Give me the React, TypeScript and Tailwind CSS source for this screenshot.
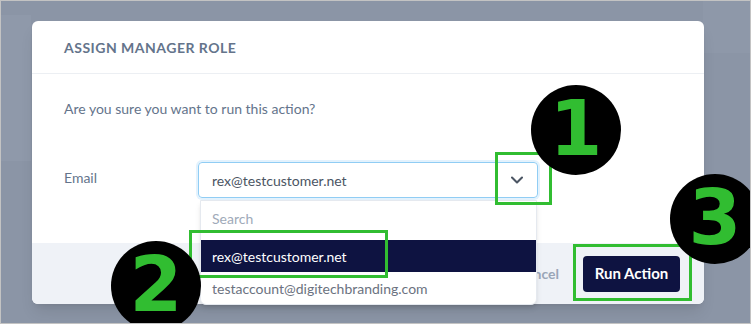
import { ChevronDown } from 'lucide-react'

const font = { fontFamily: 'Lato, "Open Sans", sans-serif' }

const Marker = ({ n, className }: { n: string; className: string }) => (
  <div
    className={`absolute flex h-[90px] w-[90px] items-center justify-center rounded-full bg-black text-[76px] font-bold leading-none text-[#31bd31] ${className}`}
    style={{ fontFamily: '"DejaVu Sans", sans-serif' }}
  >
    <span className="-mt-[2px]">{n}</span>
  </div>
)

const App = () => {
  return (
    <div
      className="relative h-[324px] w-[751px] overflow-hidden border border-[#c3c3c3] bg-[#8b95a6] pl-[31px] pt-[20px]"
      style={font}
    >
      {/* faint page behind the overlay */}
      <div className="absolute left-0 top-[14px] h-[146px] w-[30px] bg-[#8f99aa]" />
      <div className="absolute right-0 top-0 h-[52px] w-[47px] bg-[#8e98a9]" />

      {/* Modal */}
      <div className="relative flex h-[283px] w-[672px] flex-col overflow-hidden rounded-md bg-white shadow-lg">
        <div className="flex h-[53px] items-center border-b border-[#eceff3] px-8">
          <h2 className="text-[14px] font-bold uppercase tracking-[0.5px] text-[#64748b]">
            Assign Manager Role
          </h2>
        </div>

        <div className="flex-1 px-8 pt-[25px]">
          <p className="text-[14px] leading-5 text-[#64748b]">
            Are you sure you want to run this action?
          </p>

          <div className="mt-[43px] flex items-start">
            <label className="w-[134px] pt-[6px] text-[14px] leading-5 text-[#64748b]">Email</label>
            <div className="flex h-[36px] w-[340px] items-center justify-between rounded border border-[#90cdf4] pl-[13px] pr-[10px] shadow-[0_0_0_2px_#e3f2fd]">
              <span className="text-[14px] text-[#4b5563]">rex@testcustomer.net</span>
              <ChevronDown size={20} strokeWidth={2.5} className="text-[#4b5563]" />
            </div>
          </div>
        </div>

        <div className="flex h-[61px] items-center justify-end gap-6 bg-[#eff2f7] pr-6">
          <span className="text-[14px] font-bold text-[#9aa6b8]">Cancel</span>
          <button className="h-[36px] w-[97px] rounded bg-[#0e1341] text-[15px] font-bold text-white">
            Run Action
          </button>
        </div>
      </div>

      {/* Open dropdown */}
      <div className="absolute left-[199px] top-[199px] w-[337px] overflow-hidden rounded-b-md border border-[#e5e9ef] bg-white text-[14px] shadow-md">
        <div className="h-[39px] px-[11px] pt-[8px] leading-5 text-[#a0aab9]">Search</div>
        <div className="flex h-[32px] items-center bg-[#0e1341] px-[11px] text-white">rex@testcustomer.net</div>
        <div className="flex h-[32px] items-center px-[11px] text-[#6b7280]">testaccount@digitechbranding.com</div>
      </div>

      {/* Annotation boxes */}
      <div className="absolute left-[494px] top-[151px] h-[53px] w-[57px] border-[3px] border-[#31bd31]" />
      <div className="absolute left-[188px] top-[229px] h-[48px] w-[199px] border-[3px] border-[#31bd31]" />
      <div className="absolute left-[572px] top-[243px] h-[57px] w-[119px] border-[3px] border-[#31bd31]" />

      {/* Step markers */}
      <Marker n="1" className="left-[530px] top-[84px]" />
      <Marker n="2" className="left-[110px] top-[240px]" />
      <Marker n="3" className="left-[669px] top-[173px]" />
    </div>
  )
}

export default App
